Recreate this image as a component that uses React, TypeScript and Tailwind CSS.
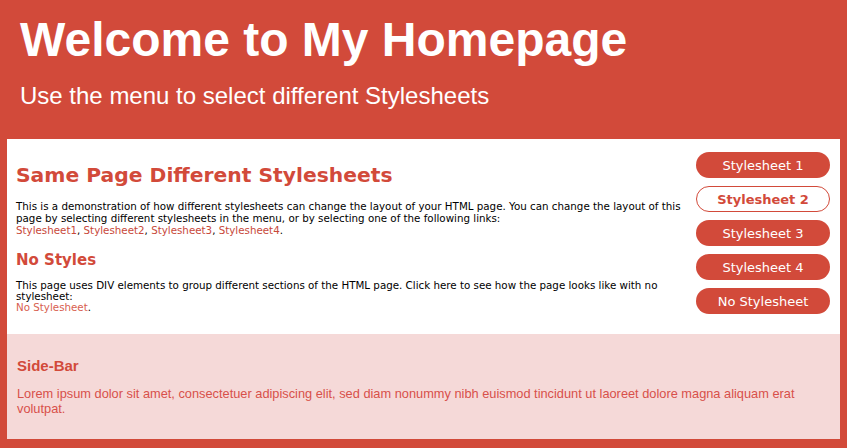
export default function App() {
  const btn = "flex h-[26px] w-[134px] items-center justify-center rounded-full text-[13px] leading-none";
  const v = { fontFamily: '"DejaVu Sans", Verdana, sans-serif' };
  return (
    <div className="h-[448px] w-[847px] overflow-hidden bg-[#d24a3a] px-[7px] pb-[9px]" style={{ fontFamily: '"Liberation Sans", Arial, sans-serif' }}>
      <header className="h-[139px] pl-[13px] pt-[13px] text-white">
        <h1 className="text-[48px] font-bold leading-[54px]">Welcome to My Homepage</h1>
        <p className="mt-[15px] text-[24px] leading-[28px]">Use the menu to select different Stylesheets</p>
      </header>
      <main className="flex h-[195px] bg-white">
        <div className="flex-1 pl-[9px] pr-[12px] pt-[24px]" style={v}>
          <h2 className="text-[20.3px] font-bold leading-[24px] text-[#d24a3a]">Same Page Different Stylesheets</h2>
          <p className="mt-[13px] text-[10.3px] leading-[12px] text-black">
            This is a demonstration of how different stylesheets can change the layout of your HTML page. You can change the layout of this page by selecting different stylesheets in the menu, or by selecting one of the following links:
            <br />
            <a className="text-[#c8483a]">Stylesheet1</a>, <a className="text-[#c8483a]">Stylesheet2</a>, <a className="text-[#c8483a]">Stylesheet3</a>, <a className="text-[#c8483a]">Stylesheet4</a>.
          </p>
          <h3 className="mt-[15px] text-[15px] font-bold leading-[19px] text-[#d24a3a]">No Styles</h3>
          <p className="mt-[10px] text-[10.3px] leading-[11px] text-black">
            This page uses DIV elements to group different sections of the HTML page. Click here to see how the page looks like with no stylesheet:
            <br />
            <a className="text-[#d8604f]">No Stylesheet</a>.
          </p>
        </div>
        <nav className="mr-[10px] mt-[13px] flex w-[134px] flex-col gap-[8px]" style={v}>
          <a className={btn + " bg-[#d24a3a] text-white"}>Stylesheet 1</a>
          <a className={btn + " border border-[#d24a3a] bg-white font-bold text-[#d24a3a]"}>Stylesheet 2</a>
          <a className={btn + " bg-[#d24a3a] text-white"}>Stylesheet 3</a>
          <a className={btn + " bg-[#d24a3a] text-white"}>Stylesheet 4</a>
          <a className={btn + " bg-[#d24a3a] text-white"}>No Stylesheet</a>
        </nav>
      </main>
      <aside className="h-[105px] bg-[#f5d9d8] pl-[10px] pr-[10px] pt-[23px] text-[#d24a3a]">
        <h3 className="text-[15px] font-bold leading-[18px]">Side-Bar</h3>
        <p className="mt-[11px] text-[12.8px] leading-[15px] text-[#d8504a]">
          Lorem ipsum dolor sit amet, consectetuer adipiscing elit, sed diam nonummy nibh euismod tincidunt ut laoreet dolore magna aliquam erat volutpat.
        </p>
      </aside>
    </div>
  );
}
